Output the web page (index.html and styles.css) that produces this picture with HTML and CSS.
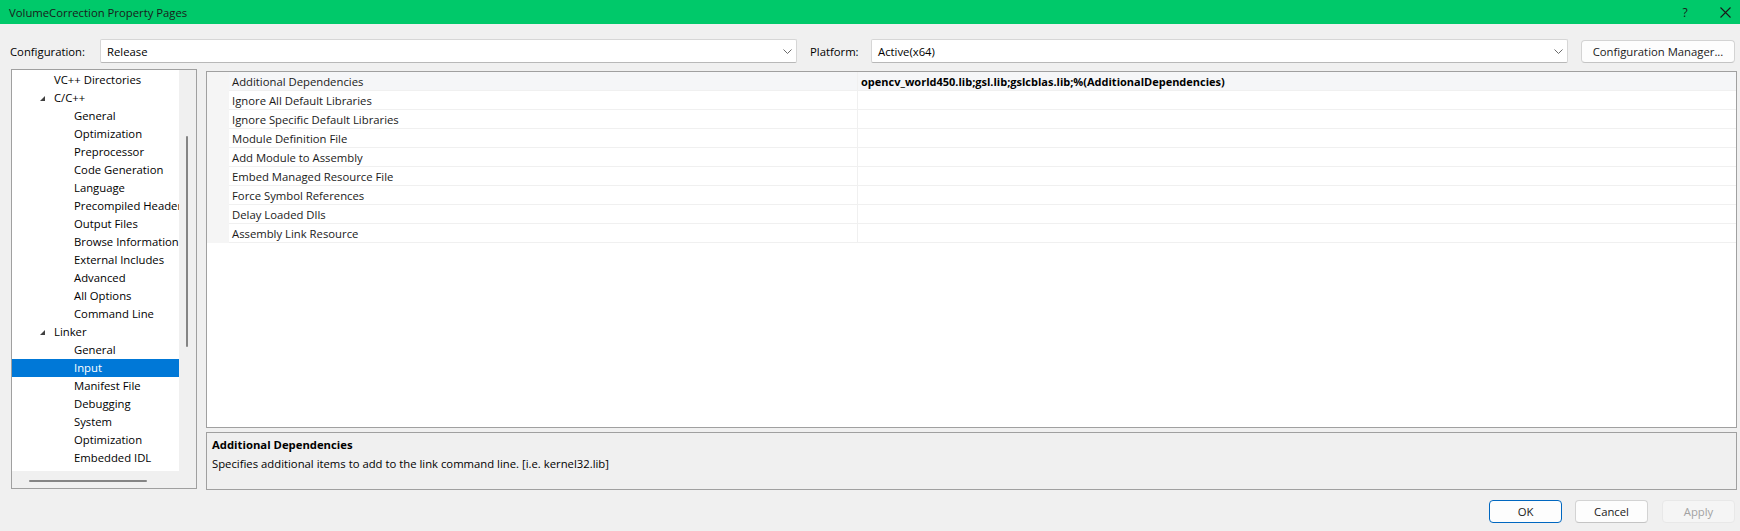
FILE: index.html
```html
<!DOCTYPE html>
<html>
<head>
<meta charset="utf-8">
<title>VolumeCorrection Property Pages</title>
<link rel="stylesheet" href="styles.css">
</head>
<body>
<div class="window">
  <div class="titlebar">
    <span class="title">VolumeCorrection Property Pages</span>
    <span class="tb-help">?</span>
    <span class="tb-close"><svg width="11" height="11" viewBox="0 0 11 11"><path d="M0.5 0.5 L10.5 10.5 M10.5 0.5 L0.5 10.5" stroke="#1a1a1a" stroke-width="1.1" fill="none"/></svg></span>
  </div>

  <div class="config-row">
    <span class="lbl lbl-config">Configuration:</span>
    <div class="combo">
      <span class="combo-text">Release</span>
      <svg class="chev" width="9" height="5" viewBox="0 0 9 5"><path d="M0.5 0.5 L4.5 4.5 L8.5 0.5" stroke="#6b6b6b" stroke-width="1" fill="none"/></svg>
    </div>
    <span class="lbl lbl-platform">Platform:</span>
    <div class="combo">
      <span class="combo-text">Active(x64)</span>
      <svg class="chev" width="9" height="5" viewBox="0 0 9 5"><path d="M0.5 0.5 L4.5 4.5 L8.5 0.5" stroke="#6b6b6b" stroke-width="1" fill="none"/></svg>
    </div>
    <button class="btn btn-cm">Configuration Manager...</button>
  </div>

  <div class="main">
    <div class="tree">
      <div class="tree-list">
        <div class="node l1">VC++ Directories</div>
        <div class="node l1"><span class="tri"></span>C/C++</div>
        <div class="node l2">General</div>
        <div class="node l2">Optimization</div>
        <div class="node l2">Preprocessor</div>
        <div class="node l2">Code Generation</div>
        <div class="node l2">Language</div>
        <div class="node l2">Precompiled Headers</div>
        <div class="node l2">Output Files</div>
        <div class="node l2">Browse Information</div>
        <div class="node l2">External Includes</div>
        <div class="node l2">Advanced</div>
        <div class="node l2">All Options</div>
        <div class="node l2">Command Line</div>
        <div class="node l1"><span class="tri"></span>Linker</div>
        <div class="node l2">General</div>
        <div class="node l2 selected">Input</div>
        <div class="node l2">Manifest File</div>
        <div class="node l2">Debugging</div>
        <div class="node l2">System</div>
        <div class="node l2">Optimization</div>
        <div class="node l2">Embedded IDL</div>
      </div>
      <div class="vscroll"><div class="vthumb"></div></div>
      <div class="hscroll"><div class="hthumb"></div></div>
      <div class="corner"></div>
    </div>

    <div class="right">
      <div class="grid">
        <div class="prow current"><div class="gut"></div><div class="pname">Additional Dependencies</div><div class="pval bold">opencv_world450.lib;gsl.lib;gslcblas.lib;%(AdditionalDependencies)</div></div>
        <div class="prow"><div class="gut"></div><div class="pname">Ignore All Default Libraries</div><div class="pval"></div></div>
        <div class="prow"><div class="gut"></div><div class="pname">Ignore Specific Default Libraries</div><div class="pval"></div></div>
        <div class="prow"><div class="gut"></div><div class="pname">Module Definition File</div><div class="pval"></div></div>
        <div class="prow"><div class="gut"></div><div class="pname">Add Module to Assembly</div><div class="pval"></div></div>
        <div class="prow"><div class="gut"></div><div class="pname">Embed Managed Resource File</div><div class="pval"></div></div>
        <div class="prow"><div class="gut"></div><div class="pname">Force Symbol References</div><div class="pval"></div></div>
        <div class="prow"><div class="gut"></div><div class="pname">Delay Loaded Dlls</div><div class="pval"></div></div>
        <div class="prow"><div class="gut"></div><div class="pname">Assembly Link Resource</div><div class="pval"></div></div>
      </div>
      <div class="desc">
        <div class="desc-title">Additional Dependencies</div>
        <div class="desc-text">Specifies additional items to add to the link command line. [i.e. kernel32.lib]</div>
      </div>
    </div>
  </div>

  <div class="footer">
    <button class="btn btn-ok">OK</button>
    <button class="btn btn-cancel">Cancel</button>
    <button class="btn btn-apply">Apply</button>
  </div>
</div>
</body>
</html>
```

FILE: styles.css
```css
* { box-sizing: border-box; }
html, body { margin: 0; padding: 0; }
body {
  background: #f0f0f0;
  font-family: "Open Sans", "Noto Sans", sans-serif;
  font-size: 11.3px;
  color: #000;
}
.window {
  width: 1740px;
  height: 531px;
  overflow: hidden;
  background: #f0f0f0;
}

/* title bar */
.titlebar {
  height: 24px;
  background: #00c96a;
  display: flex;
  align-items: center;
  padding-left: 9px;
  color: #1a1a1a;
}
.title { flex: 1; font-size: 11.3px; }
.tb-help { width: 10px; text-align: center; margin-right: 30px; font-size: 12px; color: #1a1a1a; }
.tb-close { width: 11px; height: 11px; margin-right: 9px; display: flex; }

/* configuration row */
.config-row {
  display: flex;
  align-items: center;
  margin-top: 15px;
  height: 24px;
  padding: 0 5px 0 10px;
}
.lbl { color: #000; }
.lbl-config { width: 90px; }
.lbl-platform { width: 61px; margin-left: 13px; }
.combo {
  flex: 1;
  height: 24px;
  background: #fff;
  border: 1px solid #d6d6d6;
  border-bottom-color: #b8b8b8;
  border-radius: 2px;
  display: flex;
  align-items: center;
  padding: 0 4px 0 6px;
}
.combo-text { flex: 1; }
.chev { display: block; }
.btn {
  font-family: inherit;
  font-size: 11.3px;
  color: #1a1a1a;
  background: #fdfdfd;
  border: 1px solid #d3d3d3;
  border-bottom-color: #c4c4c4;
  border-radius: 4px;
  height: 23px;
  padding: 0;
  margin: 0;
}
.btn-cm { width: 154px; margin-left: 13px; }

/* main area */
.main {
  display: flex;
  align-items: flex-start;
  gap: 9px;
  margin-top: 6px;
  padding-left: 11px;
}
.tree {
  width: 186px;
  height: 420px;
  border: 1px solid #a0a0a0;
  display: grid;
  grid-template-columns: 1fr 17px;
  grid-template-rows: 1fr 17px;
  background: #f0f0f0;
}
.tree-list {
  background: #fff;
  overflow: hidden;
  padding-top: 1px;
}
.node {
  height: 18px;
  line-height: 18px;
  white-space: nowrap;
  overflow: hidden;
  color: #000;
  position: relative;
}
.node.l1 { padding-left: 42px; }
.node.l2 { padding-left: 62px; }
.node.selected { background: #0078d7; color: #fff; }
.tri {
  position: absolute;
  left: 28px;
  top: 7px;
  width: 0;
  height: 0;
  border-left: 5px solid transparent;
  border-bottom: 5px solid #404040;
}
.vscroll { background: #f0f0f0; padding-top: 66px; }
.vthumb { width: 2px; height: 211px; background: #858585; margin-left: 7px; border-radius: 1px; }
.hscroll { background: #f0f0f0; padding-top: 9px; padding-left: 17px; }
.hthumb { width: 118px; height: 2px; background: #858585; border-radius: 1px; }
.corner { background: #f0f0f0; }

.right {
  width: 1531px;
  display: flex;
  flex-direction: column;
  padding-top: 2px;
}
.grid {
  height: 357px;
  border: 1px solid #a0a0a0;
  background: #fff;
}
.prow {
  display: grid;
  grid-template-columns: 22px 629px 1fr;
  height: 19px;
}
.gut { background: #f5f5f5; }
.pname, .pval {
  height: 19px;
  line-height: 18px;
  padding-top: 1px;
  border-bottom: 1px solid #f0f0f0;
  white-space: nowrap;
  overflow: hidden;
  padding-left: 3px;
  color: #1a1a1a;
}
.pname { border-right: 1px solid #f0f0f0; }
.pval.bold { font-weight: 700; color: #000; font-size: 11px; }
.prow.current .pname, .prow.current .pval { background: #f5f6f8; }

.desc {
  margin-top: 4px;
  height: 58px;
  border: 1px solid #a0a0a0;
  background: #f0f0f0;
  padding: 4px 5px 2px;
}
.desc-title { font-weight: 700; line-height: 16px; height: 16px; }
.desc-text { line-height: 16px; margin-top: 3px; }

/* footer */
.footer {
  display: flex;
  justify-content: flex-end;
  margin-top: 10px;
  padding-right: 5px;
  gap: 13px;
}
.footer .btn { width: 73px; height: 23px; }
.btn-ok { border: 1px solid #0067c0; }
.btn-apply { background: #f5f5f5; border-color: #e8e8e8; color: #a2a2a2; margin-left: 1px; }
```
